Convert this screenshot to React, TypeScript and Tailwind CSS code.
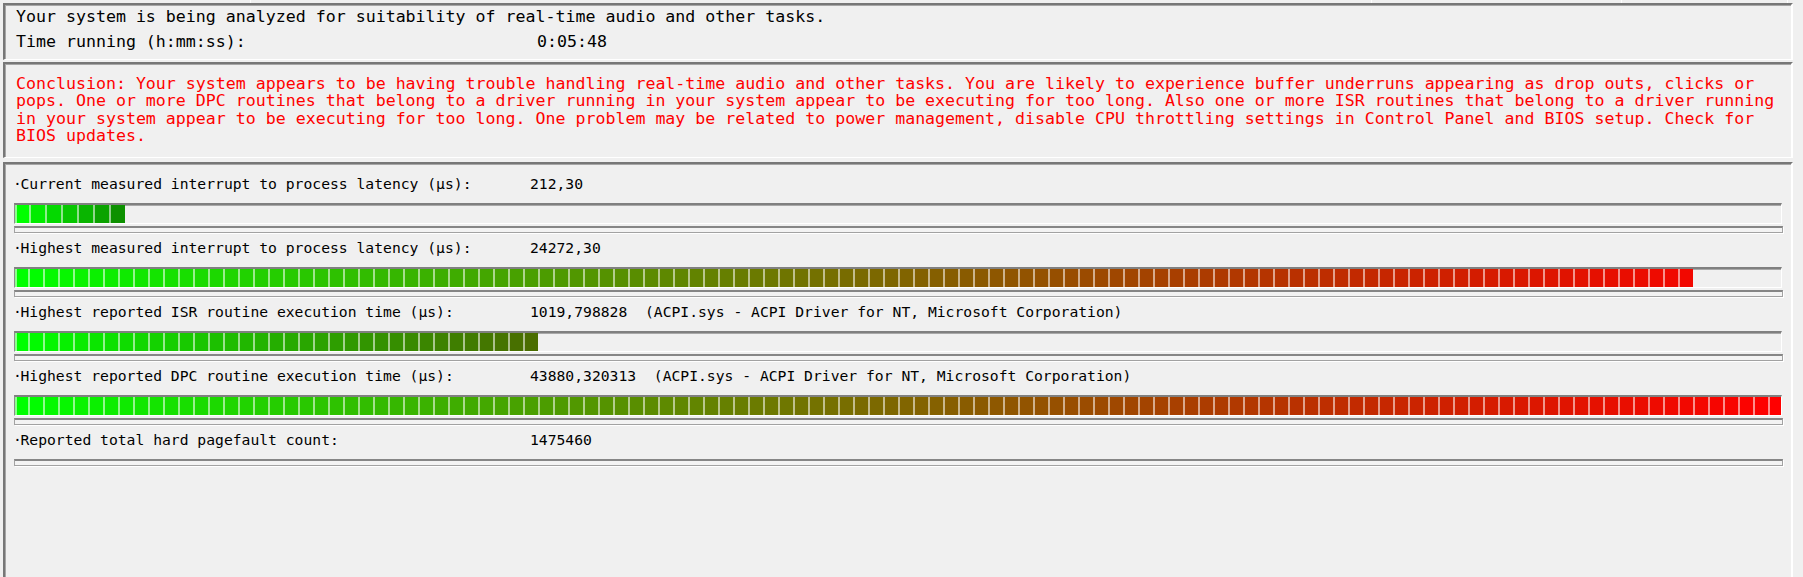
import React from "react";

const rows = [
  {
    label: "Current measured interrupt to process latency (µs):",
    value: "212,30",
    segs: 7,
    pitch: 16,
  },
  {
    label: "Highest measured interrupt to process latency (µs):",
    value: "24272,30",
    segs: 112,
    pitch: 15,
  },
  {
    label: "Highest reported ISR routine execution time (µs):",
    value: "1019,798828  (ACPI.sys - ACPI Driver for NT, Microsoft Corporation)",
    segs: 35,
    pitch: 15,
  },
  {
    label: "Highest reported DPC routine execution time (µs):",
    value: "43880,320313  (ACPI.sys - ACPI Driver for NT, Microsoft Corporation)",
    segs: 118,
    pitch: 15,
  },
  {
    label: "Reported total hard pagefault count:",
    value: "1475460",
    segs: 0,
    pitch: 15,
  },
];

const conclusion = [
  "Conclusion: Your system appears to be having trouble handling real-time audio and other tasks. You are likely to experience buffer underruns appearing as drop outs, clicks or",
  "pops. One or more DPC routines that belong to a driver running in your system appear to be executing for too long. Also one or more ISR routines that belong to a driver running",
  "in your system appear to be executing for too long. One problem may be related to power management, disable CPU throttling settings in Control Panel and BIOS setup. Check for",
  "BIOS updates.",
];

// green -> red along the full scale, shaded darker toward the end of the fill
function segColor(i: number, n: number) {
  const pos = i / 117;
  const shade = n > 1 ? 1 - 0.4 * (i / (n - 1)) : 1;
  const r = Math.round(255 * pos);
  const g = Math.round(255 * (1 - pos) * shade);
  return `rgb(${r},${g},0)`;
}

const panel =
  "border-t-2 border-l-2 border-t-[#777777] border-l-[#777777] border-b border-r-2 border-b-white border-r-white shadow-[inset_1px_1px_0_#a6a6a6] bg-[#f0f0f0]";

function Meter({ segs, pitch }: { segs: number; pitch: number }) {
  return (
    <div className="ml-[9px] w-[1768px] h-[21px] border-t-2 border-l border-t-[#808080] border-l-[#8c8c8c] border-b border-r border-b-white border-r-white shadow-[inset_0_1px_0_#a8a8a8] overflow-hidden flex">
      {Array.from({ length: segs }).map((_, i) => (
        <div
          key={i}
          className="h-full shrink-0 border-l-2 border-white/55"
          style={{
            backgroundColor: segColor(i, segs),
            width: i === 0 ? pitch - 2 : pitch,
          }}
        />
      ))}
    </div>
  );
}

function ThinBar() {
  return (
    <div className="ml-[9px] w-[1769px] h-[7px] border border-t-2 border-[#a2a2a2] border-t-[#868686] bg-[#f3f3f3] shadow-[1px_1px_0_#ffffff]" />
  );
}

export default function App() {
  return (
    <div className="w-[1803px] h-[577px] overflow-hidden bg-[#f0f0f0] text-black font-['DejaVu_Sans_Mono',monospace]">
      {/* list header remnants above */}
      <div className="h-[3px] flex">
        <div className="w-[250px]" />
        <div className="w-px bg-white" />
        <div className="w-[1120px]" />
        <div className="w-px bg-white" />
        <div className="w-[249px]" />
        <div className="w-px bg-white" />
        <div className="w-[165px]" />
        <div className="w-px bg-white" />
      </div>

      <div className="pl-[3px] pr-[10px] flex flex-col">
        {/* status panel */}
        <div className={`${panel} h-[57px] pl-[11px] pt-[2px] text-[16.6px] leading-[20px] whitespace-pre`}>
          <div>Your system is being analyzed for suitability of real-time audio and other tasks.</div>
          <div className="mt-[5px] flex">
            <span className="w-[521px] shrink-0">Time running (h:mm:ss):</span>
            <span>0:05:48</span>
          </div>
        </div>

        {/* conclusion panel */}
        <div className={`${panel} mt-[2px] h-[96px] pl-[11px] pt-[11px] text-[16.6px] leading-[17.4px] text-[#ff0000] whitespace-pre`}>
          {conclusion.map((line) => (
            <div key={line}>{line}</div>
          ))}
        </div>

        {/* measurements panel */}
        <div className={`${panel} mt-[4px] h-[440px] pt-[10px] text-[14.7px] leading-[20px]`}>
          {rows.map((row) => (
            <div key={row.label} className="flex flex-col mb-[5px]">
              <div className="flex pl-[8px] whitespace-pre">
                <span className="w-[517px] shrink-0">
                  <span className="inline-block w-[7.5px]">·</span>
                  {row.label}
                </span>
                <span>{row.value}</span>
              </div>
              {row.segs > 0 ? (
                <>
                  <div className="mt-[9px]">
                    <Meter segs={row.segs} pitch={row.pitch} />
                  </div>
                  <div className="mt-[2px]">
                    <ThinBar />
                  </div>
                </>
              ) : (
                <div className="mt-[9px]">
                  <ThinBar />
                </div>
              )}
            </div>
          ))}
        </div>
      </div>
    </div>
  );
}
